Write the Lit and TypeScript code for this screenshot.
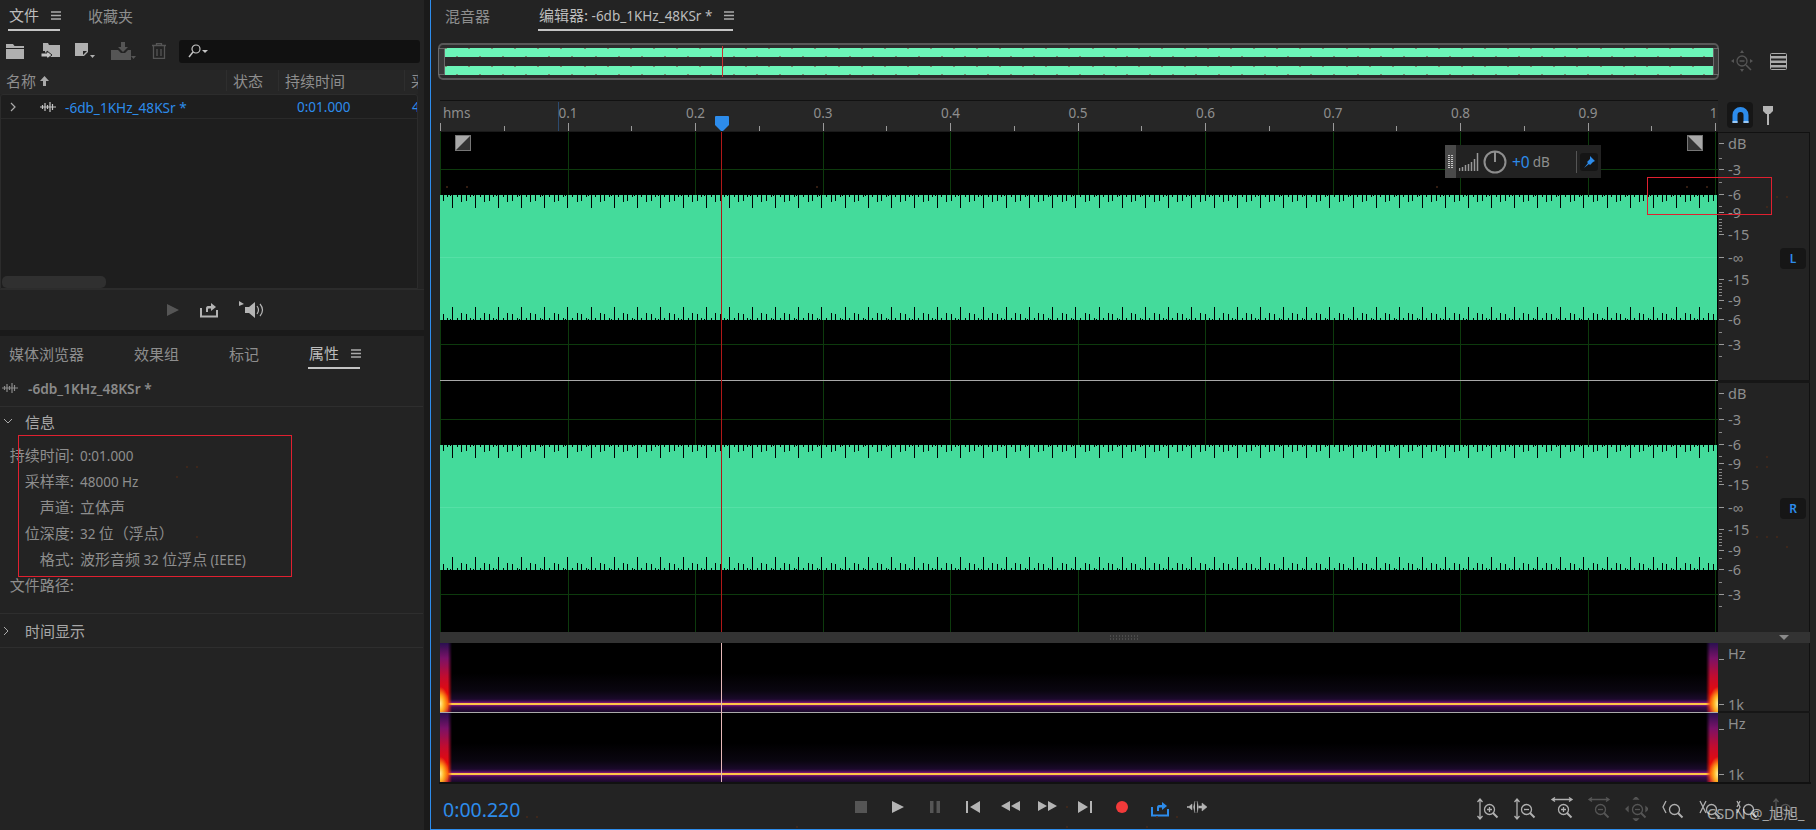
import { LitElement, html, css } from 'lit';
import { customElement } from 'lit/decorators.js';

const WAVE_W = 1278;
const TICK_PERIOD = 23.09;
const SUB_TICKS: [number, number][] = [
  [0, 13], [4.6, 2], [9.2, 7], [13.8, 6], [18.4, 2], [20.8, 1],
];

function edgeTicks(y: number, dir: number) {
  let d = '';
  for (let i = -1; i * TICK_PERIOD < WAVE_W; i++) {
    for (const [off, h] of SUB_TICKS) {
      const x = Math.round(12 + i * TICK_PERIOD + off);
      if (x < 0 || x > WAVE_W - 2) continue;
      d += `M${x + 0.5} ${y}v${dir * h}`;
    }
  }
  return d;
}

function gridV() {
  let d = '';
  for (let i = 0; i <= 10; i++) d += `M${Math.round(i * 127.5) + 0.5} 0V500`;
  return d;
}

const fileWave = html`<svg class="fwave" width="16" height="10" viewBox="0 0 16 10"><path d="M0 5h16M2.500 3v4M5 1v8M7.500 3v4M10 0v10M12.500 2v6" stroke="currentColor" stroke-width="1.200" fill="none"/></svg>`;
const burger = html`<svg class="burger" width="10" height="9" viewBox="0 0 10 9"><path d="M0 1h10M0 4.500h10M0 8h10" stroke="currentColor" stroke-width="1.300"/></svg>`;
const loopIcon = html`<svg width="18" height="16" viewBox="0 0 18 16"><path d="M1 6v8.500h16V8" fill="none" stroke="currentColor" stroke-width="2"/><path d="M6 10V6.500c0-2 1-2.500 3-2.500h2V1l5 4-5 4V6.500H9c-1 0-1 .5-1 1.500v2z" fill="currentColor"/></svg>`;

function zoomIcon(extra: string, sign: string, dim = false) {
  return html`<svg class=${dim ? 'dim' : ''} width="24" height="24" viewBox="0 0 24 24" fill="none" stroke="currentColor" stroke-width="1.300">
    <path d=${extra}/>
    <circle cx="13.500" cy="12.500" r="5"/>
    <path d=${sign}/>
    <path d="M17 16l4.500 4.500" stroke-width="2"/>
  </svg>`;
}

const vArrows = 'M4 2v20M1.500 5L4 2l2.500 3M1.500 19L4 22l2.500-3';
const hArrows = 'M2 2.500h20M5 .5L2 2.500l3 2M19 .5l3 2-3 2';
const plus = 'M11 12.500h5M13.500 10v5';
const minus = 'M11 12.500h5';

const RULER = ['0.1', '0.2', '0.3', '0.4', '0.5', '0.6', '0.7', '0.8', '0.9', '1.'];
const DB = [
  [143, 'dB'], [169, '-3'], [194, '-6'], [212, '-9'], [234, '-15'], [257, '-∞'], [279, '-15'], [300, '-9'], [319, '-6'], [344, '-3'],
  [393, 'dB'], [419, '-3'], [444, '-6'], [463, '-9'], [484, '-15'], [507, '-∞'], [529, '-15'], [550, '-9'], [569, '-6'], [594, '-3'],
] as [number, string][];
const MINOR_DB = [158, 182, 206, 219, 222, 225, 228, 231];
const MINOR_TICKS = [
  ...MINOR_DB,
  ...MINOR_DB.map((y) => 514 - y),
  ...MINOR_DB.map((y) => y + 250),
  ...MINOR_DB.map((y) => 764 - y),
];
const INFO = [
  ['持续时间:', html`<span class="lat">0:01.000</span>`],
  ['采样率:', html`<span class="lat">48000 Hz</span>`],
  ['声道:', html`立体声`],
  ['位深度:', html`<span class="lat">32</span> 位（浮点）`],
  ['格式:', html`波形音频 <span class="lat">32</span> 位浮点 <span class="lat">(IEEE)</span>`],
  ['文件路径:', html``],
];
const NOISE = [
  [186, 466], [196, 466], [176, 476], [196, 536], [446, 186], [466, 186], [816, 186], [1436, 186], [1686, 186], [1706, 186],
  [1776, 196], [1786, 196], [1766, 206], [1766, 456], [1766, 466], [1756, 466], [1766, 536], [1756, 536], [1776, 536], [1786, 546],
  [446, 816], [526, 816], [536, 816], [796, 826], [1066, 806], [1066, 826], [1146, 826], [1156, 816], [1176, 816],
];

@customElement('app-root')
export class AppRoot extends LitElement {
  static styles = css`
    :host {
      display: flex;
      width: 1816px;
      height: 830px;
      position: relative;
      overflow: hidden;
      background: #1a1a1a;
      color: #8e8e8e;
      font-family: "Noto Sans CJK SC", "Noto Sans", sans-serif;
      font-size: 15px;
    }
    .lat { font-family: "Noto Sans", sans-serif; font-size: 13.500px; }
    svg { display: block; flex: none; }
    .dim { color: #555; }

    .left { width: 424px; flex: none; display: flex; flex-direction: column; gap: 6px; margin-right: 6px; }
    .panel { background: #232323; display: flex; flex-direction: column; }
    .files { height: 330px; flex: none; }
    .props { flex: 1; }

    .tabs { height: 32px; flex: none; display: flex; align-items: flex-start; position: relative; }
    .tab { height: 31px; line-height: 34px; padding: 1px 1px 0; white-space: nowrap; display: flex; gap: 12px; align-items: center; box-sizing: border-box; }
    .tab.on { color: #bdbdbd; border-bottom: 2px solid #c4c4c4; }
    .burger { color: #aaa; margin-right: -2px; }

    .tools { height: 38px; flex: none; display: flex; align-items: center; color: #b0b0b0; padding-left: 6px; }
    .search { width: 241px; height: 23px; background: #111; border-radius: 3px; display: flex; align-items: center; padding-left: 9px; box-sizing: border-box; }
    .thead { height: 24px; flex: none; display: grid; grid-template-columns: 226px 52px 126px 14px; width: 418px; background: #262626; overflow: hidden; align-items: center; padding-bottom: 3px; box-sizing: border-box; }
    .thead > div { padding-left: 6px; white-space: nowrap; overflow: hidden; box-sizing: border-box; border-left: 1px solid #2e2e2e; display: flex; gap: 4px; align-items: center; }
    .list { height: 195px; flex: none; width: 418px; box-sizing: border-box; background: #1e1e1e; border: 1px solid #2c2c2c; border-radius: 3px 3px 0 0; position: relative; overflow: hidden; }
    .row { height: 22px; display: flex; align-items: center; color: #2d8ceb; border-bottom: 1px solid #2a2a2a; position: relative; white-space: nowrap; padding-top: 1px; overflow: hidden; }
    .row span { flex: none; font-family: "Noto Sans", sans-serif; font-size: 13.500px; }
    .row .chev { margin-left: 9px; margin-right: 24px; color: #aaa; }
    .row .fwave { color: #c4c4c4; margin-right: 9px; }
    .row .name { font-size: 13.600px; width: 232px; }
    .row .dur { width: 115px; }
    .scroll { position: absolute; left: 1px; bottom: 0; width: 104px; height: 12px; background: #303030; border-radius: 5px; }
    .preview { flex: 1; display: flex; align-items: center; justify-content: center; gap: 21px; padding-left: 8px; color: #b4b4b4; border-top: 1px solid #2c2c2c; }

    .props .tabs { height: 33px; padding-top: 2px; box-sizing: border-box; }
    .fileline { height: 37px; flex: none; display: flex; align-items: center; gap: 10px; padding-left: 2px; margin-top: 1px; box-sizing: border-box; font-family: "Noto Sans", sans-serif; font-size: 13.700px; font-weight: 600; color: #8a8a8a; border-bottom: 1px solid #2e2e2e; margin-right: 1px; }
    .section { height: 28px; flex: none; display: flex; align-items: center; color: #a8a8a8; }
    .section svg { margin: 0 14px 0 3px; }
    .info { display: grid; grid-template-columns: 74px auto; column-gap: 6px; grid-auto-rows: 26.100px; align-items: center; padding-top: 6px; height: 179px; box-sizing: border-box; border-bottom: 1px solid #2e2e2e; margin-right: 1px; }
    .info .k { text-align: right; white-space: nowrap; }
    .info .v { white-space: nowrap; }
    .props .section.last { height: 33px; border-bottom: 1px solid #2e2e2e; margin-right: 1px; }

    .right { flex: 1; background: #232323; border-left: 1px solid #2d8ceb; border-bottom: 1px solid #2d8ceb; display: flex; flex-direction: column; min-width: 0; }
    .right .tabs { padding-left: 13px; gap: 47px; }
    .overrow { height: 68px; flex: none; display: flex; align-items: center; padding-left: 6px; padding-bottom: 9px; box-sizing: border-box; color: #aaa; }
    .overrow .ov { margin-right: 11px; }

    .ed { margin-left: 8px; flex: none; width: 1372px; }
    .rulerrow { height: 32px; display: flex; }
    .ruler { width: 1278px; flex: none; position: relative; overflow: hidden; background: #262626; border-top: 1px solid #111; box-sizing: border-box; margin-left: 1px; border-bottom: 1px solid #1a1a1a; }
    .rl { position: absolute; top: 3px; line-height: 18px; font-family: "Noto Sans", sans-serif; font-size: 13.500px; transform: translateX(-50%); }
    .hms { position: absolute; left: 3px; top: 3px; line-height: 18px; font-family: "Noto Sans", sans-serif; font-size: 13.500px; }
    .rt { position: absolute; bottom: 0; width: 1px; background: #9a9a9a; }
    .loopmark { position: absolute; left: 118px; top: 1px; bottom: 0; width: 1px; background: #2c4a6e; }
    .magnet { margin-left: 9px; margin-top: 2px; width: 26px; height: 26px; background: #161616; border-radius: 4px; display: flex; align-items: center; justify-content: center; }
    .pin { margin-left: 10px; margin-top: 6px; color: #b4b4b4; }

    .waverow { height: 500px; display: flex; position: relative; }
    .wave { width: 1278px; height: 500px; flex: none; margin-left: 1px; background: #000; position: relative; }
    .scale { width: 92px; flex: none; position: relative; border-right: 1px solid #111; border-top: 1px solid #111; box-sizing: border-box; }
    .scale .l { position: absolute; left: 10px; font-family: "Noto Sans", sans-serif; font-size: 14.500px; line-height: 16px; transform: translateY(-50%); color: #8e8e8e; }
    .scale .t { position: absolute; left: 1px; width: 5px; height: 1px; background: #999; }
    .scale .m { position: absolute; left: 1px; width: 3px; height: 1px; background: #888; }
    .chsep { position: absolute; left: 0; top: 247px; width: 92px; height: 3px; background: #161616; }
    .ch { position: absolute; left: 62px; width: 26px; height: 21px; background: #161616; border-radius: 4px; color: #2d8ceb; font-family: "Noto Sans", sans-serif; font-size: 12px; font-weight: 600; text-align: center; line-height: 21px; }

    .fade { position: absolute; top: 3px; width: 16px; height: 16px; }
    .hud { position: absolute; left: 1005px; top: 13px; width: 156px; height: 33px; background: #222; display: flex; align-items: center; }
    .grip { width: 11px; height: 33px; background: #4a4a4a; display: flex; align-items: center; justify-content: center; margin-right: 3px; }
    .hud .pw { margin: 0 5px 0 4px; color: #8e8e8e; }
    .hud .gain { color: #2d8ceb; font-family: "Noto Sans", sans-serif; font-size: 15.500px; margin-right: 3px; }
    .hud .db { font-family: "Noto Sans", sans-serif; font-size: 13.500px; flex: 1; }
    .hud .pbtn { width: 18px; height: 18px; margin: 0 3px; background: #151515; border-radius: 3px; display: flex; align-items: center; justify-content: center; }
    .hud .vsep { width: 1px; height: 22px; background: #555; }
    .playhead { position: absolute; left: 721px; top: 132px; width: 1px; height: 500px; background: #b01818; }
    .marker { position: absolute; left: 715px; top: 116px; }

    .divider { height: 11px; background: #333; margin-left: 1px; width: 1370px; display: flex; align-items: center; position: relative; }
    .divider .dots { position: absolute; left: 670px; top: 3px; }
    .divider .tri { position: absolute; left: 1339px; top: 3px; }

    .specrow { height: 139px; display: flex; position: relative; border-bottom: 2px solid #111; box-sizing: content-box; }
    .spec { width: 1278px; flex: none; margin-left: 1px; height: 139px; display: flex; flex-direction: column; position: relative; }
    .sp { height: 69px; flex: none; position: relative; background: linear-gradient(#000 0, #000 30px, #0a0610 48px, #1a0a2a 56px, #3a0c4a 58px, #8a1a78 60px, #ffc648 60px, #ffc648 62px, #8a1a78 62px, #3a0c4a 64px, #1a0a2a 69px); }
    .sp + .sp { box-sizing: border-box; height: 70px; border-top: 1px solid #aaa; }
    .edge { position: absolute; top: 0; bottom: 0; width: 12px; background:
      radial-gradient(ellipse 9px 17px at 0 88%, #fff2a0 0, #ffb020 45%, rgba(255, 60, 0, 0) 100%),
      linear-gradient(#2a1050 0, #7a1268 22%, #c00c30 48%, #e80a0a 72%, #ff4a00 88%, #c01830 100%);
      -webkit-mask-image: linear-gradient(90deg, #000 65%, transparent 100%);
      mask-image: linear-gradient(90deg, #000 65%, transparent 100%);
    }
    .edge.a { left: 0; }
    .edge.b { right: 0; transform: scaleX(-1); }
    .specline { position: absolute; left: 721px; top: 643px; width: 1px; height: 139px; background: #e6b8b8; }
    .sscale { width: 92px; flex: none; position: relative; border-right: 1px solid #111; box-sizing: border-box; }
    .sscale .l { position: absolute; left: 10px; font-family: "Noto Sans", sans-serif; font-size: 14.500px; line-height: 16px; transform: translateY(-50%); }
    .sscale .t { position: absolute; left: 1px; width: 5px; height: 1px; background: #999; }
    .sscale .sep { position: absolute; left: 0; top: 68px; width: 92px; height: 2px; background: #161616; }

    .bottom { flex: 1; display: grid; grid-template-columns: 411px 374px 1fr; align-items: center; padding-top: 5px; }
    .time { color: #2d8ceb; font-family: "Noto Sans", sans-serif; font-size: 19.500px; padding-left: 12px; }
    .transport { display: flex; color: #b4b4b4; }
    .transport > div { width: 37.400px; display: flex; justify-content: center; }
    .zooms { display: flex; justify-content: flex-end; padding-right: 14px; color: #b0b0b0; }
    .zooms > div { width: 37px; display: flex; justify-content: center; }

    .ann { position: absolute; border: 1px solid #e02030; pointer-events: none; box-sizing: border-box; }
    .a1 { left: 18px; top: 435px; width: 274px; height: 142px; }
    .a2 { left: 1647px; top: 177px; width: 125px; height: 38px; }
    .mark { position: absolute; left: 1707px; top: 803px; font-family: "Noto Sans", "Noto Sans CJK SC", sans-serif; font-size: 14.500px; line-height: 20px; color: rgba(255, 255, 255, 0.6); white-space: nowrap; pointer-events: none; }
    .noise { position: absolute; left: 0; top: 0; pointer-events: none; }
  `;

  private renderOverview() {
    let t = '';
    for (let x = 9; x < 1275; x += 23.09) {
      t += `M${Math.round(x)} 5v1M${Math.round(x + 11)} 13v1M${Math.round(x)} 23v1M${Math.round(x + 11)} 31v1`;
    }
    return html`<svg class="ov" width="1283" height="37" viewBox="0 0 1283 37">
      <rect x="2" y="1" width="1279" height="35" rx="4" fill="#2c2c2c" stroke="#585858" stroke-width="2"/>
      <rect x="8" y="5" width="1268" height="9" fill="#6cf5b8"/>
      <rect x="8" y="23" width="1268" height="9" fill="#6cf5b8"/>
      <path d=${t} stroke="#7a3030" stroke-width="1" fill="none"/>
      <path d="M285.500 3V34" stroke="#c83030"/>
      <rect x="1.500" y="5.500" width="6" height="26" fill="#3a3a3a" stroke="#6a6a6a"/>
      <rect x="1276.500" y="5.500" width="5" height="26" fill="#3a3a3a" stroke="#6a6a6a"/>
    </svg>`;
  }

  private renderWave() {
    const h = [37, 212, 287, 462].map((y) => `M0 ${y + 0.5}H${WAVE_W}`).join('');
    return html`<svg width="1278" height="500" viewBox="0 0 1278 500">
      <path d=${h + gridV()} stroke="#0d3a0d" fill="none"/>
      <rect x="0" y="63" width="1277" height="125" fill="#44db9b"/>
      <rect x="0" y="313" width="1277" height="125" fill="#44db9b"/>
      <path d=${[125, 375].map((y) => `M0 ${y + 0.5}H1277`).join('')} stroke="#55e0a6" fill="none"/>
      <path d=${edgeTicks(63, 1) + edgeTicks(188, -1) + edgeTicks(313, 1) + edgeTicks(438, -1)} stroke="#000" fill="none"/>
      <rect x="0" y="248" width="1278" height="1" fill="#a8a8a8"/>
    </svg>`;
  }

  private fadeIcon(flip: boolean) {
    return html`<svg class="fade" style=${flip ? 'left:1247px' : 'left:15px'} viewBox="0 0 16 16">
      <rect x=".5" y=".5" width="15" height="15" fill="#a8a8a8" stroke="#777"/>
      <path d=${flip ? 'M1 1L15 15H1z' : 'M15 1L1 15H15z'} fill="#333"/>
    </svg>`;
  }

  render() {
    return html`
      <div class="left">
        <div class="panel files">
          <div class="tabs">
            <div class="tab on" style="margin-left:8px">文件 ${burger}</div>
            <div class="tab" style="margin-left:27px">收藏夹</div>
          </div>
          <div class="tools">
            <svg width="18" height="15" viewBox="0 0 18 15" style="margin-right:17px"><path d="M0 0h7l1.500 2H18v2H0zM0 5h18v10H0z" fill="currentColor"/></svg>
            <svg width="20" height="17" viewBox="0 0 20 17" style="margin-right:13px"><path d="M2 0h5l1 2h11v12H9v-3H4V8H2z" fill="currentColor"/><path d="M0 10h6V8l5 4-5 4v-2H0z" fill="#c4c4c4" stroke="#232323"/></svg>
            <svg width="21" height="16" viewBox="0 0 21 16" style="margin-right:16px"><path d="M1 0h13v9l-4 4H1z" fill="currentColor"/><path d="M9 8h4l-4 4z" fill="#232323"/><path d="M16 12h5l-2.500 3z" fill="currentColor"/></svg>
            <svg class="dim" width="25" height="18" viewBox="0 0 25 18" style="margin-right:16px"><path d="M10 0h4v5h3l-5 5-5-5h3zM0 8h7l3 3h4l3-3h3v10H0z" fill="currentColor"/><path d="M20 14h5l-2.500 3z" fill="currentColor"/></svg>
            <svg class="dim" width="14" height="16" viewBox="0 0 14 16" style="margin-right:13px"><path d="M0 2.500h14M4.500 2.500V.5h5v2M1.500 3v12.500h11V3M5 6v7M9 6v7" stroke="currentColor" stroke-width="1.300" fill="none"/></svg>
            <div class="search">
              <svg width="20" height="14" viewBox="0 0 20 14"><circle cx="8" cy="5" r="4" fill="none" stroke="#c4c4c4" stroke-width="1.200"/><path d="M5 8L1 13" stroke="#c4c4c4" stroke-width="1.500"/><path d="M14 6h6l-3 3z" fill="#c4c4c4"/></svg>
            </div>
          </div>
          <div class="thead">
            <div style="border:0">名称<svg width="9" height="10" viewBox="0 0 9 10"><path d="M4.500 0L9 5H6v5H3V5H0z" fill="#aaa"/></svg></div>
            <div>状态</div>
            <div>持续时间</div>
            <div>采样率</div>
          </div>
          <div class="list">
            <div class="row">
              <svg class="chev" width="6" height="10" viewBox="0 0 6 10"><path d="M1 1l4 4-4 4" stroke="currentColor" fill="none" stroke-width="1.200"/></svg>
              ${fileWave}
              <span class="name">-6db_1KHz_48KSr *</span>
              <span class="dur">0:01.000</span>
              <span>48000</span>
            </div>
            <div class="scroll"></div>
          </div>
          <div class="preview">
            <svg class="dim" width="12" height="12" viewBox="0 0 12 12"><path d="M0 0l12 6-12 6z" fill="currentColor"/></svg>
            ${loopIcon}
            <svg width="26" height="18" viewBox="0 0 26 18"><path d="M0 0l5 3-5 2zM6 6h4l6-5v16l-6-5H6z" fill="currentColor"/><path d="M18 5q3 4 0 8M21 3q5 6 0 12" stroke="currentColor" fill="none" stroke-width="1.200"/></svg>
          </div>
        </div>
        <div class="panel props">
          <div class="tabs">
            <div class="tab" style="margin-left:8px">媒体浏览器</div>
            <div class="tab" style="margin-left:48px">效果组</div>
            <div class="tab" style="margin-left:48px">标记</div>
            <div class="tab on" style="margin-left:48px">属性 ${burger}</div>
          </div>
          <div class="fileline">${fileWave}<span>-6db_1KHz_48KSr *</span></div>
          <div class="section"><svg width="10" height="6" viewBox="0 0 10 6"><path d="M1 1l4 4 4-4" stroke="#aaa" fill="none"/></svg><span style="margin-left:-2px">信息</span></div>
          <div class="info">
            ${INFO.map(([k, v]) => html`<div class="k">${k}</div><div class="v">${v}</div>`)}
          </div>
          <div class="section last"><svg width="6" height="10" viewBox="0 0 6 10" style="margin-right:16px"><path d="M1 1l4 4-4 4" stroke="#aaa" fill="none"/></svg>时间显示</div>
        </div>
      </div>

      <div class="right">
        <div class="tabs">
          <div class="tab">混音器</div>
          <div class="tab on"><span>编辑器: <span class="lat">-6db_1KHz_48KSr *</span></span> ${burger}</div>
        </div>
        <div class="overrow">
          ${this.renderOverview()}
          <svg class="dim" width="24" height="24" viewBox="0 0 24 24" style="margin-right:15px"><circle cx="11" cy="11" r="5" fill="none" stroke="currentColor" stroke-width="1.300"/><path d="M8.500 11h5M15 15l5 5" stroke="currentColor" stroke-width="1.500"/><path d="M11 0l2 3H9zM11 22l2-3H9zM0 11l3-2v4zM22 11l-3-2v4z" fill="currentColor"/></svg>
          <svg width="17" height="17" viewBox="0 0 17 17"><rect x=".5" y=".5" width="16" height="16" rx="1" fill="none" stroke="currentColor"/><path d="M1 3h15v2.500H1zM1 7.500h15V10H1zM1 12h15v2.500H1z" fill="currentColor"/></svg>
        </div>
        <div class="ed">
          <div class="rulerrow">
            <div class="ruler">
              <span class="hms">hms</span>
              <div class="loopmark"></div>
              ${RULER.map((t, i) => html`<span class="rl" style="left:${(i + 1) * 127.5 + 0.5}px">${t}</span>`)}
              ${Array.from({ length: 21 }, (_, i) => html`<div class="rt" style="left:${Math.round(i * 63.75)}px;height:${i % 2 ? 5 : 8}px"></div>`)}
            </div>
            <div class="magnet"><svg width="17" height="17" viewBox="0 0 17 17"><path d="M.5 8a8 8 0 0 1 16 0v8h-5V8a3 3 0 0 0-6 0v8h-5z" fill="#2d8ceb"/><path d="M.5 14h5v2h-5zM11.500 14h5v2h-5z" fill="#9cc8f4"/></svg></div>
            <svg class="pin" width="10" height="19" viewBox="0 0 10 19"><path d="M0 0h10v5L7 8H3L0 5z" fill="currentColor"/><rect x="4" y="8" width="2" height="11" fill="currentColor"/></svg>
          </div>
          <div class="waverow">
            <div class="wave">
              ${this.renderWave()}
              ${this.fadeIcon(false)}
              ${this.fadeIcon(true)}
              <div class="hud">
                <div class="grip"><svg width="5" height="13" viewBox="0 0 5 13"><path d="M0 .5h5M0 2.500h5M0 4.500h5M0 6.500h5M0 8.500h5M0 10.500h5M0 12.500h5" stroke="#c8c8c8" stroke-dasharray="2 1"/></svg></div>
                <svg width="20" height="18" viewBox="0 0 20 18" style="color:#999"><path d="M.5 18v-3M3.500 18v-4M6.500 18v-6M9.500 18v-7M12.500 18V9M15.500 18V6M18.500 18V0" stroke="currentColor" stroke-width="1.500"/></svg>
                <svg class="pw" width="24" height="24" viewBox="0 0 24 24"><circle cx="12" cy="12" r="10.500" fill="none" stroke="currentColor" stroke-width="2"/><path d="M12 1v11" stroke="currentColor" stroke-width="2"/></svg>
                <span class="gain">+0</span>
                <span class="db">dB</span>
                <div class="vsep"></div>
                <div class="pbtn"><svg width="12" height="12" viewBox="0 0 12 12"><path d="M7 0l5 5-2 1-3 3-1-1-5 4 4-5-1-1 3-3z" fill="#2d8ceb"/></svg></div>
              </div>
            </div>
            <div class="scale">
              ${MINOR_TICKS.map((y) => html`<div class="m" style="top:${y - 133}px"></div>`)}
              ${DB.map(([y, t]) => html`<div class="t" style="top:${y - 133}px"></div><div class="l" style="top:${y - 133}px">${t}</div>`)}
              <div class="chsep"></div>
              <div class="ch" style="top:115px">L</div>
              <div class="ch" style="top:365px">R</div>
            </div>
          </div>
          <div class="divider">
            <svg class="dots" width="28" height="5" viewBox="0 0 28 5"><path d="M0 1h28M0 4h28" stroke="#666" stroke-dasharray="1 2"/></svg>
            <svg class="tri" width="10" height="5" viewBox="0 0 10 5"><path d="M0 0h10L5 5z" fill="#8a8a8a"/></svg>
          </div>
          <div class="specrow">
            <div class="spec">
              <div class="sp"><div class="edge a"></div><div class="edge b"></div></div>
              <div class="sp"><div class="edge a"></div><div class="edge b"></div></div>
            </div>
            <div class="sscale">
              <div class="sep"></div>
              ${[[653, 'Hz'], [704, '1k'], [723, 'Hz'], [774, '1k']].map(([y, t]) => html`<div class="t" style="top:${(y as number) - 643 + (t === 'Hz' ? 6 : 0)}px"></div><div class="l" style="top:${(y as number) - 643}px">${t}</div>`)}
            </div>
          </div>
        </div>
        <div class="bottom">
          <div class="time">0:00.220</div>
          <div class="transport">
            <div class="dim"><svg width="12" height="12" viewBox="0 0 12 12"><rect width="12" height="12" fill="currentColor"/></svg></div>
            <div><svg width="12" height="12" viewBox="0 0 12 12"><path d="M0 0l12 6-12 6z" fill="currentColor"/></svg></div>
            <div class="dim"><svg width="10" height="12" viewBox="0 0 10 12"><path d="M0 0h3.500v12H0zM6.500 0H10v12H6.500z" fill="currentColor"/></svg></div>
            <div><svg width="14" height="12" viewBox="0 0 14 12"><path d="M0 0h2v12H0zM14 0v12L4 6z" fill="currentColor"/></svg></div>
            <div><svg width="19" height="10" viewBox="0 0 19 10"><path d="M9 0v10L0 5zM19 0v10L10 5z" fill="currentColor"/></svg></div>
            <div><svg width="19" height="10" viewBox="0 0 19 10"><path d="M0 0v10l9-5zM10 0v10l9-5z" fill="currentColor"/></svg></div>
            <div><svg width="14" height="12" viewBox="0 0 14 12"><path d="M12 0h2v12h-2zM0 0v12l10-6z" fill="currentColor"/></svg></div>
            <div><svg width="12" height="12" viewBox="0 0 12 12"><circle cx="6" cy="6" r="6" fill="#f23a3a"/></svg></div>
            <div style="color:#2d8ceb">${loopIcon}</div>
            <div><svg width="20" height="12" viewBox="0 0 20 12"><path d="M0 5.500h2L5 3v6L2 6.500H0zM8 0L6.500 6 8 12M10 0l1.500 6L10 12M12 5h3V2l5 4-5 4V7h-3z" fill="currentColor" stroke="currentColor" stroke-width=".5"/></svg></div>
          </div>
          <div class="zooms">
            <div>${zoomIcon(vArrows, plus)}</div>
            <div>${zoomIcon(vArrows, minus)}</div>
            <div>${zoomIcon(hArrows, plus)}</div>
            <div>${zoomIcon(hArrows, minus, true)}</div>
            <div>${zoomIcon('M12 0l2 2h-4zM12 24l2-2h-4zM2 12l2-2v4zM24 12l-2-2v4z', minus, true)}</div>
            <div>${zoomIcon('M5 4L2 10l3 6', '')}</div>
            <div>${zoomIcon('M2 4l3 6-3 6M8 4L5 10l3 6', '')}</div>
            <div>${zoomIcon('M2 4l3 6-3 6M5 4L2 10', '')}</div>
            <div>${zoomIcon(vArrows, minus, true)}</div>
          </div>
        </div>
      </div>

      <div class="playhead"></div>
      <svg class="marker" width="14" height="15" viewBox="0 0 14 15"><path d="M1 0h12a1 1 0 0 1 1 1v8l-6 6h-2L0 9V1a1 1 0 0 1 1-1z" fill="#2d8ceb"/></svg>
      <div class="specline"></div>
      <div class="ann a1"></div>
      <div class="ann a2"></div>
      <svg class="noise" width="1816" height="830" viewBox="0 0 1816 830"><path d=${NOISE.map(([x, y]) => `M${x} ${y}h2v2h-2z`).join('')} fill="#4a2a18" fill-opacity=".7"/></svg>
      <div class="mark">CSDN @_旭旭_</div>
    `;
  }
}
